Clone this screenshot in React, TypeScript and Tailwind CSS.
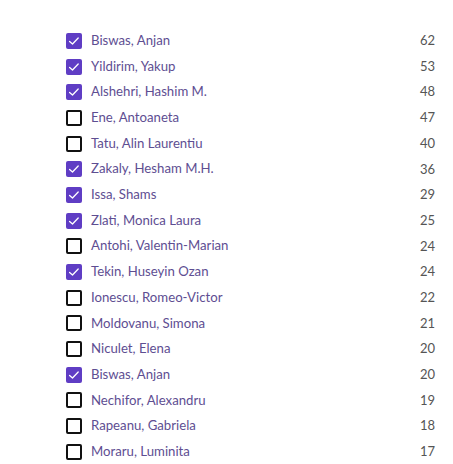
import React from "react";

const rows: [string, number, boolean][] = [
  ["Biswas, Anjan", 62, true],
  ["Yildirim, Yakup", 53, true],
  ["Alshehri, Hashim M.", 48, true],
  ["Ene, Antoaneta", 47, false],
  ["Tatu, Alin Laurentiu", 40, false],
  ["Zakaly, Hesham M.H.", 36, true],
  ["Issa, Shams", 29, true],
  ["Zlati, Monica Laura", 25, true],
  ["Antohi, Valentin-Marian", 24, false],
  ["Tekin, Huseyin Ozan", 24, true],
  ["Ionescu, Romeo-Victor", 22, false],
  ["Moldovanu, Simona", 21, false],
  ["Niculet, Elena", 20, false],
  ["Biswas, Anjan", 20, true],
  ["Nechifor, Alexandru", 19, false],
  ["Rapeanu, Gabriela", 18, false],
  ["Moraru, Luminita", 17, false],
];

export default function App() {
  return (
    <div
      className="w-[453px] h-[464px] bg-white overflow-hidden pt-[28px] pl-[66px] pr-[18px]"
      style={{ fontFamily: "Lato, 'Noto Sans', sans-serif" }}
    >
      {rows.map(([name, n, checked], i) => (
        <div key={i} className="flex items-center h-[25.7px]">
          {checked ? (
            <span className="w-[16px] h-[16px] rounded-[2px] bg-[#5f3dc4] flex items-center justify-center shrink-0">
              <svg width="14" height="14" viewBox="0 0 14 14" fill="none">
                <path d="M2.6 7.4 L5.5 10 L11.2 4" stroke="white" strokeWidth="1.3" strokeLinecap="round" strokeLinejoin="round" />
              </svg>
            </span>
          ) : (
            <span className="w-[16px] h-[16px] rounded-[2px] border-2 border-[#111] bg-white shrink-0" />
          )}
          <span className="ml-[9px] text-[13.2px] text-[#5e4e92] flex-1">{name}</span>
          <span className="text-[13px] text-[#555]">{n}</span>
        </div>
      ))}
    </div>
  );
}
